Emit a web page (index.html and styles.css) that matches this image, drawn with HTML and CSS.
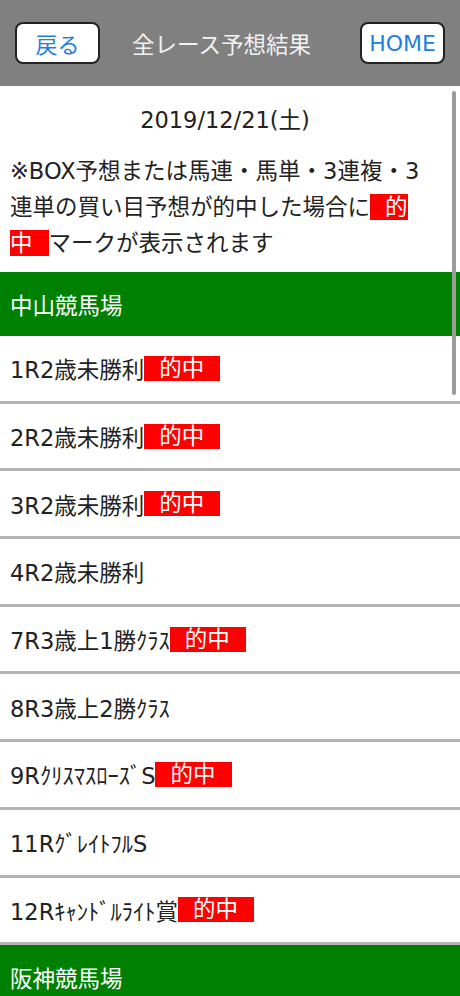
FILE: index.html
```html
<!DOCTYPE html>
<html lang="ja">

<head>
    <meta charset="UTF-8">
    <meta name="viewport" content="width=device-width, initial-scale=1.0">
    <title>全レース予想結果</title>
    <link rel="stylesheet" href="styles.css">
</head>

<body>
    <header class="topbar">
        <a class="nav-btn" href="#">戻る</a>
        <h1 class="title">全レース予想結果</h1>
        <a class="nav-btn home" href="#">HOME</a>
    </header>

    <main>
        <div class="intro">
            <p class="date">2019/12/21(土)</p>
            <p class="note">※BOX予想または馬連・馬単・3連複・3連単の買い目予想が的中した場合に<span class="hit">的中</span>マークが表示されます</p>
        </div>

        <section class="venue">
            <h2 class="venue-name">中山競馬場</h2>
            <ul class="races">
                <li class="race">1R2歳未勝利<span class="hit">的中</span></li>
                <li class="race">2R2歳未勝利<span class="hit">的中</span></li>
                <li class="race">3R2歳未勝利<span class="hit">的中</span></li>
                <li class="race">4R2歳未勝利</li>
                <li class="race">7R3歳上1勝ｸﾗｽ<span class="hit">的中</span></li>
                <li class="race">8R3歳上2勝ｸﾗｽ</li>
                <li class="race">9RｸﾘｽﾏｽﾛｰｽﾞS<span class="hit">的中</span></li>
                <li class="race">11RｸﾞﾚｲﾄﾌﾙS</li>
                <li class="race">12Rｷｬﾝﾄﾞﾙﾗｲﾄ賞<span class="hit">的中</span></li>
            </ul>
        </section>

        <section class="venue">
            <h2 class="venue-name">阪神競馬場</h2>
        </section>
    </main>

    <div class="scroll-thumb"></div>
</body>

</html>
```

FILE: styles.css
```css
body {
    margin: 0;
    font-family: "DejaVu Sans", "Noto Sans CJK JP", sans-serif;
    font-size: 22.5px;
    color: #222;
    background-color: #fff;
    overflow: hidden;
}

.topbar {
    display: flex;
    align-items: center;
    height: 86px;
    padding: 0 15px;
    box-sizing: border-box;
    background-color: #808080;
}

.nav-btn {
    display: flex;
    align-items: center;
    justify-content: center;
    width: 85px;
    height: 42px;
    box-sizing: border-box;
    border: 2px solid #222;
    border-radius: 8px;
    background-color: #fff;
    color: #1f7fe0;
    font-size: 22px;
    text-decoration: none;
}

.title {
    margin: 0 0 0 32px;
    font-size: 22.5px;
    font-weight: normal;
    color: #f2f2f2;
}

.home {
    margin-left: auto;
}

.intro {
    padding: 16px 20px 11px 10px;
}

.intro p {
    margin: 0;
    line-height: 36px;
}

.date {
    text-align: center;
    margin-bottom: 15px !important;
}

.hit {
    padding: 0 16px 0 15px;
    background-color: #ff0000;
    color: #fff;
}

.races .hit {
    line-height: 25px;
    display: inline-block;
}

.venue-name {
    display: flex;
    align-items: center;
    height: 64px;
    margin: 0;
    padding: 0 10px;
    background-color: #008000;
    color: #fff;
    font-size: 22.5px;
    font-weight: normal;
}

.races {
    list-style: none;
    margin: 0;
    padding: 0;
}

.race {
    display: flex;
    align-items: center;
    height: 64.7px;
    padding: 0 10px;
    border-bottom: 3px solid #b4b4b4;
}

.scroll-thumb {
    position: fixed;
    top: 91px;
    right: 4px;
    width: 4px;
    height: 304px;
    border-radius: 2px;
    background-color: #9c9c9c;
}
```
